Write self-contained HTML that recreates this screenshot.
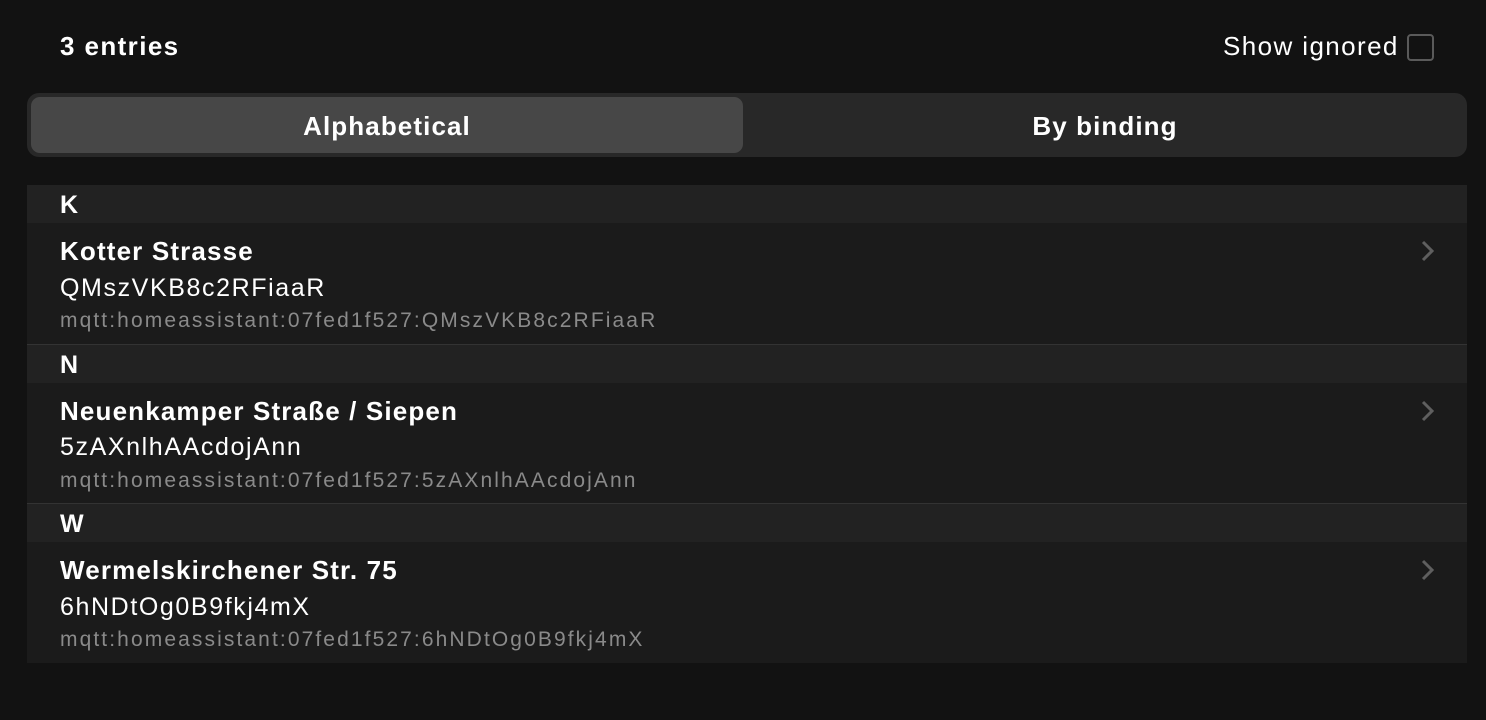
<!DOCTYPE html>
<html><head><meta charset="utf-8"><style>
body{margin:0;width:1486px;height:720px;background:#121212;font-family:"Liberation Sans",sans-serif;color:#fff;position:relative;overflow:hidden}
.a{position:absolute}
.hdr{position:absolute;left:27px;width:1440px;height:38px;background:#222;}
.hdr span{position:absolute;left:33px;top:6px;font-size:25px;font-weight:bold}
.row{position:absolute;left:27px;width:1440px;background:#1b1b1b}
.t{position:absolute;left:33px;font-size:26px;font-weight:bold;letter-spacing:1.15px}
.s{position:absolute;left:33px;font-size:25px;letter-spacing:1.6px}
.m{position:absolute;left:33px;font-size:21px;color:#8a8a8a;letter-spacing:2.1px}
.chev{position:absolute;left:1393px;width:16px;height:24px}
</style></head><body>
<div class="a" style="left:60px;top:31px;font-size:26px;font-weight:bold;letter-spacing:1.4px">3 entries</div>
<div class="a" style="left:1223px;top:31px;font-size:26px;letter-spacing:1.4px">Show ignored</div>
<div class="a" style="left:1407px;top:34px;width:27px;height:27px;border:2px solid #5a5a5a;border-radius:4px;box-sizing:border-box"></div>
<div class="a" style="left:27px;top:93px;width:1440px;height:64px;background:#282828;border-radius:12px"></div>
<div class="a" style="left:31px;top:97px;width:712px;height:56px;background:#474747;border-radius:9px"></div>
<div class="a" style="left:31px;top:111px;width:712px;text-align:center;font-size:26px;font-weight:bold;letter-spacing:1.1px">Alphabetical</div>
<div class="a" style="left:747px;top:111px;width:716px;text-align:center;font-size:26px;font-weight:bold;letter-spacing:1.1px">By binding</div>

<div class="hdr" style="top:185px"><span>K</span></div>
<div class="row" style="top:223px;height:121px">
<div class="t" style="top:13px">Kotter Strasse</div>
<div class="s" style="top:51px">QMszVKB8c2RFiaaR</div>
<div class="m" style="top:86px">mqtt:homeassistant:07fed1f527:QMszVKB8c2RFiaaR</div>
<svg class="chev" style="top:16px" viewBox="0 0 16 24"><path d="M3 3l9 9-9 9" fill="none" stroke="#5f5f5f" stroke-width="3"/></svg>
</div>
<div class="a" style="left:27px;top:344px;width:1440px;height:1px;background:#333"></div>
<div class="hdr" style="top:345px"><span>N</span></div>
<div class="row" style="top:383px;height:120px">
<div class="t" style="top:13px">Neuenkamper Straße / Siepen</div>
<div class="s" style="top:50px">5zAXnlhAAcdojAnn</div>
<div class="m" style="top:86px">mqtt:homeassistant:07fed1f527:5zAXnlhAAcdojAnn</div>
<svg class="chev" style="top:16px" viewBox="0 0 16 24"><path d="M3 3l9 9-9 9" fill="none" stroke="#5f5f5f" stroke-width="3"/></svg>
</div>
<div class="a" style="left:27px;top:503px;width:1440px;height:1px;background:#333"></div>
<div class="hdr" style="top:504px"><span>W</span></div>
<div class="row" style="top:542px;height:121px">
<div class="t" style="top:13px">Wermelskirchener Str. 75</div>
<div class="s" style="top:51px">6hNDtOg0B9fkj4mX</div>
<div class="m" style="top:86px">mqtt:homeassistant:07fed1f527:6hNDtOg0B9fkj4mX</div>
<svg class="chev" style="top:16px" viewBox="0 0 16 24"><path d="M3 3l9 9-9 9" fill="none" stroke="#5f5f5f" stroke-width="3"/></svg>
</div>
</body></html>
